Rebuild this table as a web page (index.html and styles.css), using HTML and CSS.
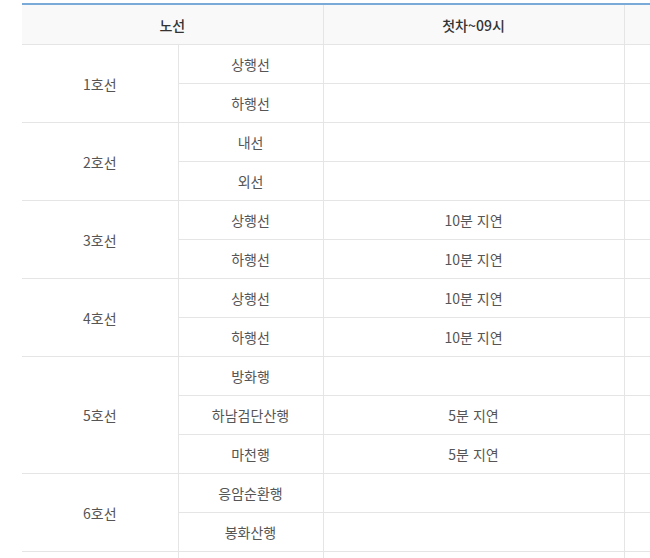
FILE: index.html
```html
<!DOCTYPE html>
<html lang="ko">
<head>
<meta charset="utf-8">
<link rel="stylesheet" href="styles.css">
</head>
<body>
<div class="wrap">
<table class="tbl">
  <colgroup>
    <col class="c1"><col class="c2"><col class="c3"><col class="c4">
  </colgroup>
  <thead>
    <tr><th colspan="2">노선</th><th>첫차~09시</th><th></th></tr>
  </thead>
  <tbody>
    <tr><td rowspan="2">1호선</td><td>상행선</td><td></td><td></td></tr>
    <tr><td>하행선</td><td></td><td></td></tr>
    <tr><td rowspan="2">2호선</td><td>내선</td><td></td><td></td></tr>
    <tr><td>외선</td><td></td><td></td></tr>
    <tr><td rowspan="2">3호선</td><td>상행선</td><td>10분 지연</td><td></td></tr>
    <tr><td>하행선</td><td>10분 지연</td><td></td></tr>
    <tr><td rowspan="2">4호선</td><td>상행선</td><td>10분 지연</td><td></td></tr>
    <tr><td>하행선</td><td>10분 지연</td><td></td></tr>
    <tr><td rowspan="3">5호선</td><td>방화행</td><td></td><td></td></tr>
    <tr><td>하남검단산행</td><td>5분 지연</td><td></td></tr>
    <tr><td>마천행</td><td>5분 지연</td><td></td></tr>
    <tr><td rowspan="2">6호선</td><td>응암순환행</td><td></td><td></td></tr>
    <tr><td>봉화산행</td><td></td><td></td></tr>
    <tr class="tail"><td></td><td></td><td></td><td></td></tr>
  </tbody>
</table>
</div>
</body>
</html>
```
FILE: styles.css
```css
html, body {
  margin: 0;
  padding: 0;
  background: #fff;
  overflow: hidden;
}
.wrap {
  padding: 3px 0 0 22px;
  width: 1000px;
  height: 555px;
  overflow: hidden;
}
.tbl {
  border-collapse: collapse;
  table-layout: fixed;
  width: 900px;
  border-top: 2px solid #7aaad8;
  font-family: "Noto Sans CJK KR", "Noto Sans", sans-serif;
  font-size: 14px;
  color: #555;
}
.c1 { width: 156px; }
.c2 { width: 145px; }
.c3 { width: 301px; }
.c4 { width: 298px; }
.tbl th {
  height: 39px;
  padding: 0;
  background: #f9f9f9;
  color: #333;
  font-weight: 500;
  text-align: center;
  border-bottom: 1px solid #e5e5e5;
  border-left: 1px solid #e5e5e5;
}
.tbl td {
  height: 38px;
  padding: 0;
  text-align: center;
  vertical-align: middle;
  border-bottom: 1px solid #e5e5e5;
  border-left: 1px solid #e5e5e5;
}
.tbl th:first-child,
.tbl tr > td[rowspan],
.tbl tr.tail > td:first-child {
  border-left: none;
}
```
